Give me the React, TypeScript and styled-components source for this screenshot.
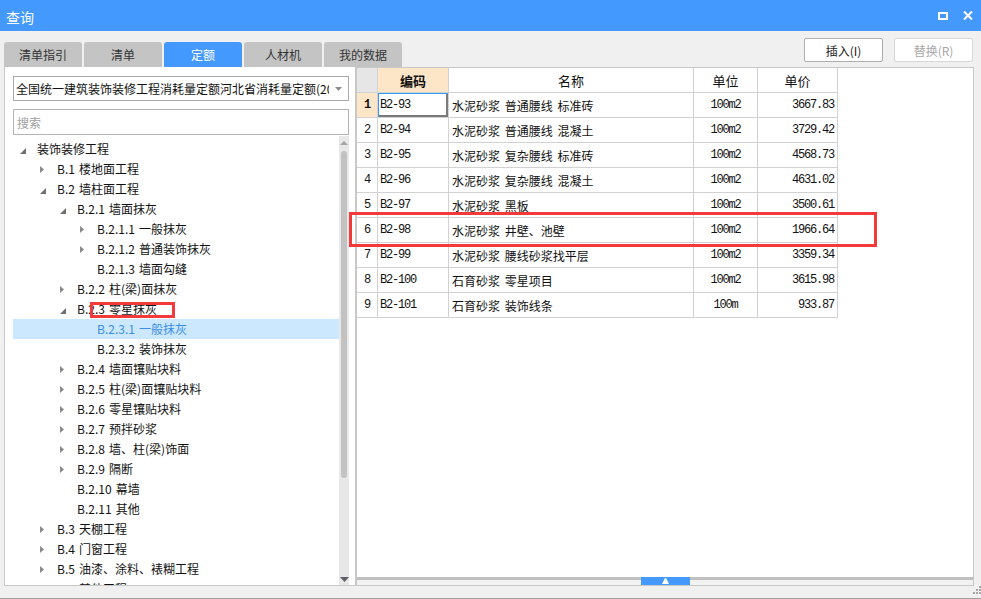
import React from 'react';
import styled, { createGlobalStyle } from 'styled-components';

const GlobalStyle = createGlobalStyle`
  html, body { margin: 0; padding: 0; background: #f0f0f0; }
  body {
    font-family: "Noto Sans CJK SC", "Noto Sans", sans-serif;
    font-size: 12px;
    color: #111;
  }
  * { box-sizing: border-box; }
`;

const Window = styled.div`
  width: 981px;
  height: 599px;
  display: flex;
  flex-direction: column;
  background: #f0f0f0;
  border-bottom: 1px solid #a0a0a0;
  overflow: hidden;
`;

const TitleBar = styled.div`
  height: 31px;
  flex: none;
  background: #4499ff;
  display: flex;
  align-items: center;
  padding: 0 8px 0 6px;
  color: #fff;
`;

const Title = styled.div`
  flex: 1;
  font-size: 14px;
  line-height: 20px;
  padding-top: 3px;
`;

const Controls = styled.div`
  display: flex;
  align-items: center;
  gap: 15px;
`;

const MaxBox = styled.div`
  width: 10px;
  height: 8px;
  border: 2px solid #fff;
`;

const Toolbar = styled.div`
  height: 36px;
  flex: none;
  display: flex;
  justify-content: space-between;
  padding: 0 8px 0 4px;
`;

const Tabs = styled.div`
  display: flex;
  gap: 2px;
  align-self: flex-end;
`;

const Tab = styled.div<{ $active?: boolean }>`
  width: 78px;
  height: 25px;
  display: flex;
  align-items: center;
  justify-content: center;
  border-radius: 3px 3px 0 0;
  background: ${(p) => (p.$active ? '#4499ff' : '#c4c4c4')};
  color: ${(p) => (p.$active ? '#fff' : '#333')};
  font-size: 12px;
`;

const Actions = styled.div`
  display: flex;
  gap: 11px;
  padding-top: 7px;
  align-items: flex-start;
`;

const Button = styled.button<{ $disabled?: boolean }>`
  width: 79px;
  height: 24px;
  padding: 0;
  background: #fff;
  border: 1px solid ${(p) => (p.$disabled ? '#d8d8d8' : '#adadad')};
  border-radius: 2px;
  color: ${(p) => (p.$disabled ? '#a8a8a8' : '#222')};
  font-family: "Noto Sans CJK SC", "Noto Sans", sans-serif;
  font-size: 12px;
`;

const Content = styled.div`
  position: relative;
  height: 519px;
  flex: none;
  display: flex;
  padding: 0 7px 0 4px;
`;

const LeftPanel = styled.div`
  width: 352px;
  flex: none;
  background: #fff;
  border: 1px solid #c8c8c8;
  border-top: none;
  display: flex;
  flex-direction: column;
  padding: 9px 6px 0 8px;
`;

const Select = styled.div`
  height: 25px;
  flex: none;
  border: 1px solid #a9a9a9;
  display: flex;
  align-items: center;
  padding: 0 6px 0 2px;
`;

const SelectText = styled.div`
  width: 313px;
  overflow: hidden;
  white-space: nowrap;
  font-size: 12px;
  color: #111;
  flex: none;
`;

const SelectArrow = styled.svg`
  margin-left: auto;
`;

const Search = styled.div`
  height: 26px;
  flex: none;
  margin-top: 8px;
  border: 1px solid #b4b4b4;
  display: flex;
  align-items: center;
  padding-left: 3px;
  color: #a0a0a0;
  font-size: 12px;
`;

const Tree = styled.div`
  flex: 1;
  min-height: 0;
  margin-top: 1px;
  display: flex;
`;

const TreeList = styled.div`
  flex: 1;
  overflow: hidden;
  padding-top: 3px;
`;

const TreeRow = styled.div<{ $level: number; $selected?: boolean }>`
  height: 20px;
  display: flex;
  align-items: center;
  padding-left: ${(p) => p.$level * 20 + 1}px;
  background: ${(p) => (p.$selected ? '#cce8ff' : 'transparent')};
  color: ${(p) => (p.$selected ? '#3a8ee6' : '#111')};
  white-space: nowrap;
  font-size: 12px;
`;

const Toggle = styled.span`
  width: 16px;
  height: 20px;
  flex: none;
  display: flex;
  align-items: center;
  justify-content: center;
`;

const OpenIcon = styled.svg`
  margin: 3px 0 0 2px;
`;

const Label = styled.span`
  margin-left: 7px;
  line-height: 20px;
  word-spacing: 1.5px;
`;

const VScroll = styled.div`
  width: 10px;
  flex: none;
  background: #e8e8e8;
  display: flex;
  flex-direction: column;
  align-items: center;
  padding: 5px 0 3px;
`;

const Thumb = styled.div`
  width: 6px;
  height: 327px;
  margin-top: 6px;
  border-radius: 3px;
  background: #c2c2c2;
`;

const ScrollSpacer = styled.div`
  flex: 1;
`;

const RightPanel = styled.div`
  flex: 1;
  background: #fff;
  border: 1px solid #c8c8c8;
  display: flex;
  flex-direction: column;
`;

const TableArea = styled.div`
  flex: 1;
  overflow: hidden;
`;

const Grid = styled.div`
  display: grid;
  grid-template-columns: 21px 71px 245px 64px 80px;
  grid-auto-rows: 25px;
  width: 481px;
`;

type Align = 'left' | 'center' | 'right';

const Cell = styled.div<{ $align?: Align; $bg?: string; $mono?: boolean; $bold?: boolean; $head?: boolean; $active?: boolean }>`
  border-right: 1px solid #d2d2d2;
  border-bottom: 1px solid #d2d2d2;
  display: flex;
  align-items: center;
  justify-content: ${(p) => (p.$align === 'right' ? 'flex-end' : p.$align === 'center' ? 'center' : 'flex-start')};
  padding: ${(p) => (p.$align === 'right' ? '0 3px 0 0' : p.$align === 'center' ? '0' : p.$mono ? '0 0 0 2px' : '0 0 0 3px')};
  background: ${(p) => p.$bg || '#fff'};
  font-family: ${(p) => (p.$mono ? '"Liberation Mono", monospace' : '"Noto Sans CJK SC", "Noto Sans", sans-serif')};
  font-size: ${(p) => (p.$mono ? '12px' : p.$head ? '13px' : '12px')};
  letter-spacing: ${(p) => (p.$mono ? '-1.2px' : '0')};
  word-spacing: ${(p) => (p.$mono ? '0' : '2px')};
  font-weight: ${(p) => (p.$bold ? 700 : 400)};
  color: #111;
  white-space: nowrap;
  box-shadow: ${(p) => (p.$active ? 'inset 1px 1px 0 #3399ff, inset -2px -2px 0 #7a7a7a' : 'none')};
`;

const Splitter = styled.div`
  height: 8px;
  flex: none;
  display: flex;
  justify-content: center;
  background: linear-gradient(#c0c0c0 0 3px, #f2f2f2 3px 100%);
`;

const SplitHandle = styled.div`
  width: 49px;
  height: 8px;
  background: #4499ff;
  display: flex;
  align-items: center;
  justify-content: center;
`;

const Footer = styled.div`
  flex: 1;
  display: flex;
  justify-content: flex-end;
  align-items: flex-start;
`;

const Mark = styled.div<{ $x: number; $y: number; $w: number; $h: number }>`
  position: absolute;
  left: ${(p) => p.$x}px;
  top: ${(p) => p.$y}px;
  width: ${(p) => p.$w}px;
  height: ${(p) => p.$h}px;
  border: 3px solid #f23a3a;
  pointer-events: none;
`;

type Node = { level: number; label: string; state: 'open' | 'closed' | 'leaf'; selected?: boolean };

const tree: Node[] = [
  { level: 0, label: '装饰装修工程', state: 'open' },
  { level: 1, label: 'B.1 楼地面工程', state: 'closed' },
  { level: 1, label: 'B.2 墙柱面工程', state: 'open' },
  { level: 2, label: 'B.2.1 墙面抹灰', state: 'open' },
  { level: 3, label: 'B.2.1.1 一般抹灰', state: 'closed' },
  { level: 3, label: 'B.2.1.2 普通装饰抹灰', state: 'closed' },
  { level: 3, label: 'B.2.1.3 墙面勾缝', state: 'leaf' },
  { level: 2, label: 'B.2.2 柱(梁)面抹灰', state: 'closed' },
  { level: 2, label: 'B.2.3 零星抹灰', state: 'open' },
  { level: 3, label: 'B.2.3.1 一般抹灰', state: 'leaf', selected: true },
  { level: 3, label: 'B.2.3.2 装饰抹灰', state: 'leaf' },
  { level: 2, label: 'B.2.4 墙面镶贴块料', state: 'closed' },
  { level: 2, label: 'B.2.5 柱(梁)面镶贴块料', state: 'closed' },
  { level: 2, label: 'B.2.6 零星镶贴块料', state: 'closed' },
  { level: 2, label: 'B.2.7 预拌砂浆', state: 'closed' },
  { level: 2, label: 'B.2.8 墙、柱(梁)饰面', state: 'closed' },
  { level: 2, label: 'B.2.9 隔断', state: 'closed' },
  { level: 2, label: 'B.2.10 幕墙', state: 'leaf' },
  { level: 2, label: 'B.2.11 其他', state: 'leaf' },
  { level: 1, label: 'B.3 天棚工程', state: 'closed' },
  { level: 1, label: 'B.4 门窗工程', state: 'closed' },
  { level: 1, label: 'B.5 油漆、涂料、裱糊工程', state: 'closed' },
  { level: 1, label: 'B.6 其他工程', state: 'closed' },
];

const rows = [
  ['B2-93', '水泥砂浆 普通腰线 标准砖', '100m2', '3667.83'],
  ['B2-94', '水泥砂浆 普通腰线 混凝土', '100m2', '3729.42'],
  ['B2-95', '水泥砂浆 复杂腰线 标准砖', '100m2', '4568.73'],
  ['B2-96', '水泥砂浆 复杂腰线 混凝土', '100m2', '4631.02'],
  ['B2-97', '水泥砂浆 黑板', '100m2', '3500.61'],
  ['B2-98', '水泥砂浆 井壁、池壁', '100m2', '1966.64'],
  ['B2-99', '水泥砂浆 腰线砂浆找平层', '100m2', '3359.34'],
  ['B2-100', '石育砂浆 零星项目', '100m2', '3615.98'],
  ['B2-101', '石育砂浆 装饰线条', '100m', '933.87'],
];

const tabs = ['清单指引', '清单', '定额', '人材机', '我的数据'];

function ToggleIcon({ state }: { state: Node['state'] }) {
  if (state === 'open') {
    return (
      <OpenIcon width="6" height="6" viewBox="0 0 6 6">
        <polygon points="6,0 6,6 0,6" fill="#6f6f6f" />
      </OpenIcon>
    );
  }
  if (state === 'closed') {
    return (
      <svg width="4" height="7" viewBox="0 0 4 7">
        <polygon points="0,0 4,3.5 0,7" fill="#8a8a8a" />
      </svg>
    );
  }
  return null;
}

export default function App() {
  return (
    <Window>
      <GlobalStyle />
      <TitleBar>
        <Title>查询</Title>
        <Controls>
          <MaxBox />
          <svg width="10" height="9" viewBox="0 0 10 9">
            <path d="M1 0.5 L9 8.5 M9 0.5 L1 8.5" stroke="#fff" strokeWidth="2" />
          </svg>
        </Controls>
      </TitleBar>
      <Toolbar>
        <Tabs>
          {tabs.map((t) => (
            <Tab key={t} $active={t === '定额'}>
              {t}
            </Tab>
          ))}
        </Tabs>
        <Actions>
          <Button>插入(I)</Button>
          <Button $disabled>替换(R)</Button>
        </Actions>
      </Toolbar>
      <Content>
        <LeftPanel>
          <Select>
            <SelectText>全国统一建筑装饰装修工程消耗量定额河北省消耗量定额(2012)</SelectText>
            <SelectArrow width="7" height="4" viewBox="0 0 7 4">
              <polygon points="0,0 7,0 3.5,4" fill="#8c8c8c" />
            </SelectArrow>
          </Select>
          <Search>搜索</Search>
          <Tree>
            <TreeList>
              {tree.map((n) => (
                <TreeRow key={n.label} $level={n.level} $selected={n.selected}>
                  <Toggle>
                    <ToggleIcon state={n.state} />
                  </Toggle>
                  <Label>{n.label}</Label>
                </TreeRow>
              ))}
            </TreeList>
            <VScroll>
              <svg width="8" height="4" viewBox="0 0 8 4">
                <polygon points="4,0 8,4 0,4" fill="#a4a4a4" />
              </svg>
              <Thumb />
              <ScrollSpacer />
              <svg width="9" height="5" viewBox="0 0 9 5">
                <polygon points="0,0 9,0 4.5,5" fill="#5f5f6a" />
              </svg>
            </VScroll>
          </Tree>
        </LeftPanel>
        <RightPanel>
          <TableArea>
            <Grid>
              <Cell $bg="#e6e6e6" />
              <Cell $align="center" $bg="#fde6c8" $bold $head>编码</Cell>
              <Cell $align="center" $head>名称</Cell>
              <Cell $align="center" $head>单位</Cell>
              <Cell $align="center" $head>单价</Cell>
              {rows.map((r, i) => (
                <React.Fragment key={r[0]}>
                  <Cell $align="center" $mono $bold={i === 0} $bg={i === 0 ? '#fde6c8' : '#fff'}>
                    {i + 1}
                  </Cell>
                  <Cell $mono $active={i === 0}>{r[0]}</Cell>
                  <Cell>{r[1]}</Cell>
                  <Cell $align="center" $mono>{r[2]}</Cell>
                  <Cell $align="right" $mono>{r[3]}</Cell>
                </React.Fragment>
              ))}
            </Grid>
          </TableArea>
          <Splitter>
            <SplitHandle>
              <svg width="7" height="6" viewBox="0 0 7 6">
                <polygon points="3,0 4,0 7,6 0,6" fill="#fff" />
              </svg>
            </SplitHandle>
          </Splitter>
        </RightPanel>
        <Mark $x={90} $y={235} $w={85} $h={16} />
        <Mark $x={349} $y={145} $w={528} $h={35} />
      </Content>
      <Footer>
        <svg width="8" height="8" viewBox="0 0 8 8">
          <rect x="6" y="0" width="2" height="2" fill="#a6a6a6" />
          <rect x="3" y="3" width="2" height="2" fill="#a6a6a6" />
          <rect x="6" y="3" width="2" height="2" fill="#a6a6a6" />
          <rect x="0" y="6" width="2" height="2" fill="#a6a6a6" />
          <rect x="3" y="6" width="2" height="2" fill="#a6a6a6" />
          <rect x="6" y="6" width="2" height="2" fill="#a6a6a6" />
        </svg>
      </Footer>
    </Window>
  );
}
